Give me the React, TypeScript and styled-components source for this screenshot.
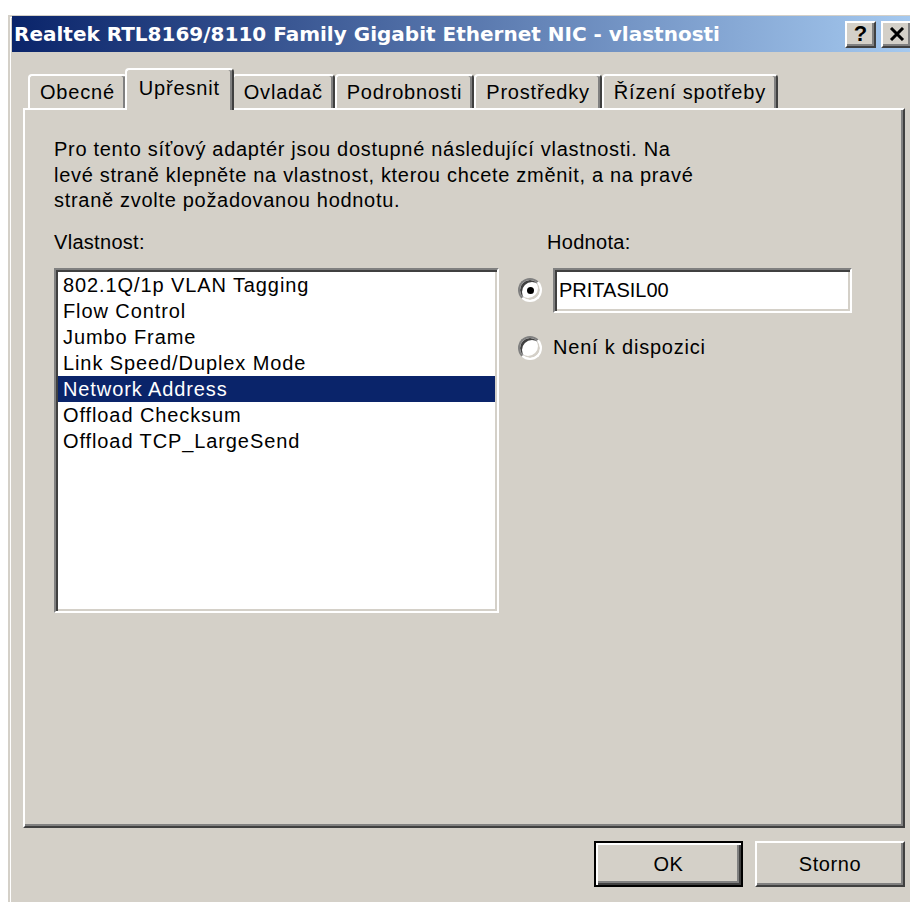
import React from 'react'
import styled, { createGlobalStyle, css } from 'styled-components'

// classic 3D palette
const face = '#D4D0C8'
const shadow = '#808080'
const dark = '#404040'
const hilite = '#FFFFFF'
const font = `"Liberation Sans", Arial, sans-serif`

const GlobalStyle = createGlobalStyle`
  html, body { margin: 0; padding: 0; background: #fff; overflow: hidden; }
  body { font-family: ${font}; }
`

const Page = styled.div`
  width: 910px;
  height: 902px;
  box-sizing: border-box;
  padding: 13px 0 0 6px;
  overflow: hidden;
`

const Window = styled.div`
  width: 916px;
  height: 900px;
  box-sizing: border-box;
  padding: 3px 6px 0 6px;
  background: ${face};
  box-shadow: inset 2px 2px 0 ${hilite}, inset 4px 4px 0 ${face}, inset 5px 5px 0 ${hilite};
`

const TitleBar = styled.div`
  height: 36px;
  display: flex;
  align-items: center;
  justify-content: space-between;
  padding: 0 4px 0 2px;
  background: linear-gradient(to right, #0A246A 0%, #A6CAF0 100%);
`

const Title = styled.span`
  color: #fff;
  font-family: "DejaVu Sans", Verdana, sans-serif;
  font-weight: bold;
  font-size: 20px;
  white-space: nowrap;
`

const Caps = styled.div`
  display: flex;
  gap: 5px;
`

const CapButton = styled.div`
  width: 31px;
  height: 27px;
  box-sizing: border-box;
  display: flex;
  align-items: center;
  justify-content: center;
  background: ${face};
  border-top: 2px solid ${hilite};
  border-left: 2px solid ${hilite};
  border-right: 2px solid ${dark};
  border-bottom: 2px solid ${dark};
  box-shadow: inset -2px -2px 0 ${shadow};
  font-weight: bold;
  font-size: 22px;
  line-height: 1;
  color: #000;
`

const Body = styled.div`
  padding: 16px 11px 0 11px;
`

const TabStrip = styled.div`
  display: flex;
  align-items: flex-end;
  padding-left: 5px;
`

const Tab = styled.div<{ $active?: boolean }>`
  height: 34px;
  box-sizing: border-box;
  display: flex;
  align-items: center;
  padding: 0 10px;
  font-size: 20px;
  letter-spacing: 0.8px;
  color: #000;
  background: ${face};
  border-top: 2px solid ${hilite};
  border-left: 2px solid ${hilite};
  border-right: 2px solid ${dark};
  border-radius: 4px 4px 0 0;
  box-shadow: inset -2px 0 0 ${shadow};
  white-space: nowrap;

  ${(p) =>
    p.$active &&
    css`
      height: 42px;
      margin: 0 -2px -2px;
      padding: 0 12px 4px;
      position: relative;
      z-index: 1;
    `}
`

const Panel = styled.div`
  height: 720px;
  box-sizing: border-box;
  padding: 27px 29px 0 29px;
  border-top: 2px solid ${hilite};
  border-left: 2px solid ${hilite};
  border-right: 2px solid ${dark};
  border-bottom: 2px solid ${dark};
  box-shadow: inset -2px -2px 0 ${shadow};
`

const Text = styled.p`
  margin: 0;
  font-size: 20px;
  letter-spacing: 0.7px;
  line-height: 25.5px;
  color: #000;
`

const Columns = styled.div`
  display: flex;
  margin-top: 15px;
`

const LeftCol = styled.div`
  width: 445px;
`

const RightCol = styled.div`
  margin-left: 18px;
  flex: 1;
`

const Label = styled.div<{ $indent?: number }>`
  font-size: 20px;
  letter-spacing: 0.3px;
  line-height: 26px;
  margin: 0 0 13px ${(p) => p.$indent || 0}px;
  color: #000;
`

const sunken = css`
  box-sizing: border-box;
  background: #fff;
  border: 2px solid;
  border-color: ${shadow} ${hilite} ${hilite} ${shadow};
  box-shadow: inset 2px 2px 0 ${dark}, inset -2px -2px 0 ${face};
`

const ListBox = styled.div`
  ${sunken};
  height: 345px;
  padding: 2px;
`

const ListRow = styled.div<{ $selected?: boolean }>`
  height: 26px;
  line-height: 26px;
  padding-left: 5px;
  font-size: 20px;
  letter-spacing: 0.9px;
  color: ${(p) => (p.$selected ? '#fff' : '#000')};
  background: ${(p) => (p.$selected ? '#0A246A' : 'transparent')};
  white-space: nowrap;
`

const RadioRow = styled.div<{ $gap?: number }>`
  display: flex;
  align-items: center;
  gap: 11px;
  margin-top: ${(p) => p.$gap || 0}px;
  font-size: 20px;
  letter-spacing: 0.8px;
  color: #000;
`

const Radio = styled.div<{ $checked?: boolean }>`
  width: 24px;
  height: 24px;
  margin-left: 1px;
  flex: none;
  box-sizing: border-box;
  border-radius: 50%;
  background: #fff;
  border: 2px solid;
  border-color: ${shadow} ${hilite} ${hilite} ${shadow};
  box-shadow: inset 2px 2px 0 ${dark}, inset -2px -2px 0 ${face};
  display: flex;
  align-items: center;
  justify-content: center;

  &::after {
    content: '';
    width: 7px;
    height: 7px;
    border-radius: 50%;
    background: #000;
    display: ${(p) => (p.$checked ? 'block' : 'none')};
  }
`

const ValueField = styled.div`
  ${sunken};
  width: 299px;
  height: 45px;
  padding-left: 4px;
  display: flex;
  align-items: center;
  font-size: 20px;
  letter-spacing: 0;
  color: #000;
`

const ButtonRow = styled.div`
  display: flex;
  justify-content: flex-end;
  gap: 12px;
  margin-top: 13px;
`

const Button = styled.div<{ $default?: boolean }>`
  width: 150px;
  height: 46px;
  box-sizing: border-box;
  display: flex;
  align-items: center;
  justify-content: center;
  font-size: 20px;
  letter-spacing: 0.6px;
  color: #000;
  background: ${face};
  border: 2px solid;
  border-color: ${hilite} ${dark} ${dark} ${hilite};
  box-shadow: inset -2px -2px 0 ${shadow};

  ${(p) =>
    p.$default &&
    css`
      width: 149px;
      border-color: #000;
      box-shadow: inset 2px 2px 0 ${hilite}, inset -2px -2px 0 ${dark}, inset -4px -4px 0 ${shadow};
    `}
`

const tabs = ['Obecné', 'Upřesnit', 'Ovladač', 'Podrobnosti', 'Prostředky', 'Řízení spotřeby']

const properties = [
  '802.1Q/1p VLAN Tagging',
  'Flow Control',
  'Jumbo Frame',
  'Link Speed/Duplex Mode',
  'Network Address',
  'Offload Checksum',
  'Offload TCP_LargeSend',
]

const CloseGlyph = () => (
  <svg width="16" height="14" viewBox="0 0 16 14">
    <path d="M2 1 L14 13 M14 1 L2 13" stroke="#000" strokeWidth="3" fill="none" />
  </svg>
)

const App = () => {
  return (
    <Page>
      <GlobalStyle />
      <Window>
        <TitleBar>
          <Title>Realtek RTL8169/8110 Family Gigabit Ethernet NIC - vlastnosti</Title>
          <Caps>
            <CapButton>?</CapButton>
            <CapButton>
              <CloseGlyph />
            </CapButton>
          </Caps>
        </TitleBar>

        <Body>
          <TabStrip>
            {tabs.map((t) => (
              <Tab key={t} $active={t === 'Upřesnit'}>
                {t}
              </Tab>
            ))}
          </TabStrip>

          <Panel>
            <Text>
              Pro tento síťový adaptér jsou dostupné následující vlastnosti. Na
              <br />
              levé straně klepněte na vlastnost, kterou chcete změnit, a na pravé
              <br />
              straně zvolte požadovanou hodnotu.
            </Text>

            <Columns>
              <LeftCol>
                <Label>Vlastnost:</Label>
                <ListBox>
                  {properties.map((p) => (
                    <ListRow key={p} $selected={p === 'Network Address'}>
                      {p}
                    </ListRow>
                  ))}
                </ListBox>
              </LeftCol>

              <RightCol>
                <Label $indent={30}>Hodnota:</Label>
                <RadioRow>
                  <Radio $checked />
                  <ValueField>PRITASIL00</ValueField>
                </RadioRow>
                <RadioRow $gap={23}>
                  <Radio />
                  <span>Není k dispozici</span>
                </RadioRow>
              </RightCol>
            </Columns>
          </Panel>

          <ButtonRow>
            <Button $default>OK</Button>
            <Button>Storno</Button>
          </ButtonRow>
        </Body>
      </Window>
    </Page>
  )
}

export default App
